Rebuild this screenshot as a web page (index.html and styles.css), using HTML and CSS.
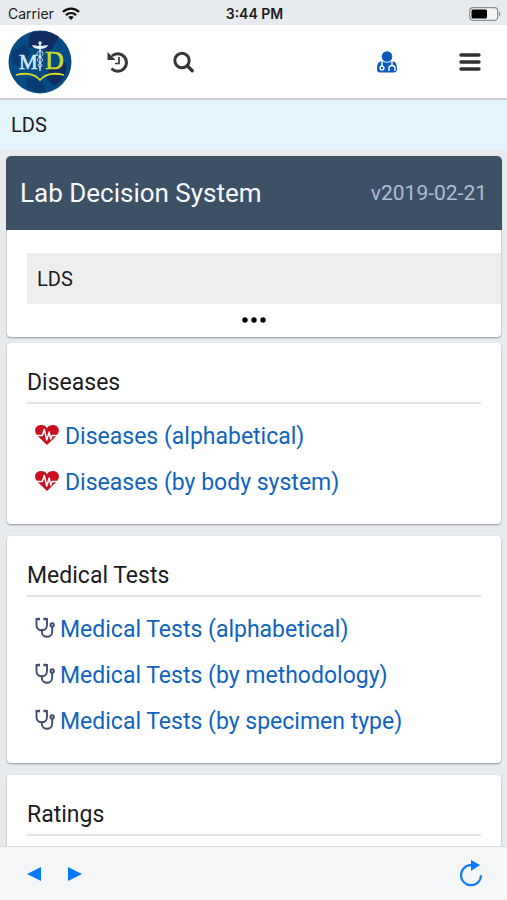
FILE: index.html
```html
<!DOCTYPE html>
<html lang="en">
<head>
<meta charset="utf-8">
<meta name="viewport" content="width=device-width, initial-scale=1">
<title>Lab Decision System</title>
<link rel="stylesheet" href="styles.css">
</head>
<body>
<svg class="defs" aria-hidden="true">
  <symbol id="heart" viewBox="0 0 24 20">
    <path fill="#c8101e" d="M12 20 2.200 10.500C-2.500 4.500 1.500 0 6 0c2.800 0 5 1.200 6 3.200C13 1.200 15.200 0 18 0c4.500 0 8.500 4.500 3.800 10.500z"/>
    <path fill="none" stroke="#fff" stroke-width="1.500" stroke-linejoin="round" d="M1 10.500h6.300L9.300 4.500l2.400 10.500L14.200 7l1.500 7 1.500-3.500H23"/>
  </symbol>
  <symbol id="stethoscope" viewBox="0 0 20 21">
    <g fill="none" stroke="#454b70" stroke-width="1.900" stroke-linecap="round">
      <path d="M4 2H1.500v6c0 7 10.500 7 10.500 0V2H9.500"/>
      <path d="M6.800 13v1.500c0 7 10.400 7 10.400 0V10"/>
      <circle cx="17.200" cy="8" r="1.700"/>
    </g>
    <path fill="#454b70" d="M2.500.7h2.500v2.600H2.500zM8.500.7H11v2.600H8.500z"/>
  </symbol>
</svg>

<div class="status">
  <div class="carrier">
    <span>Carrier</span>
    <svg width="18" height="13" viewBox="0 0 18 13" aria-hidden="true">
      <g fill="none" stroke="#111" stroke-width="2.400">
        <path d="M1 5c4.500-4.500 11.500-4.500 16 0"/>
        <path d="M4 8.200c2.900-2.800 7.100-2.800 10 0"/>
      </g>
      <path fill="#111" d="M9 13 6.200 10c1.600-1.500 4-1.500 5.600 0z"/>
    </svg>
  </div>
  <div class="clock">3:44 PM</div>
  <svg class="battery" width="32" height="14" viewBox="0 0 32 14" aria-hidden="true">
    <rect x=".7" y=".7" width="28" height="12.600" rx="3.500" fill="#f4f5f6" stroke="#8d9092" stroke-width="1.200"/>
    <rect x="2.500" y="2.500" width="15.500" height="9" rx="1.500"/>
    <path fill="#8d9092" d="M30 4.500q3 2.500 0 5z"/>
  </svg>
</div>

<header class="topbar">
  <a class="logo" href="#" aria-label="Home">
    <svg width="64" height="64" viewBox="0 0 64 64" aria-hidden="true">
      <circle cx="32" cy="32" r="31.500" fill="#064b83"/>
      <path fill="#122c62" d="M22 4c10-5 22-3 29 3l-7 12-5 3-7-6-12 2zM40 40l18-8c2 10-3 19-12 24l-8-8z"/>
      <path fill="#0b3a72" d="M4 22l13-8 5 9-8 14-9-3zM20 48l14 2 4 12c-7 1-15-1-20-6z"/>
      <text class="logo-letter" x="11" y="39" font-size="21" fill="#cfe8fb" stroke="#cfe8fb">M</text>
      <text class="logo-letter" x="37" y="39" font-size="26" fill="#cddc28" stroke="#cddc28">D</text>
      <g fill="none" stroke="#e5f1fb">
        <path stroke-width="1.300" d="M32 14v27"/>
        <path stroke-width=".9" d="M32 20c-4 3-4 5 0 7s3 4 0 6-2 3 0 5M32 20c4 3 4 5 0 7s-3 4 0 6 2 3 0 5"/>
      </g>
      <path fill="#e5f1fb" d="M32 19c-3 0-7-1-8-4l7 1 1-2 1 2 7-1c-1 3-5 4-8 4z"/>
      <circle cx="32" cy="13" r="1.700" fill="#e5f1fb"/>
      <path fill="none" stroke="#cddc28" stroke-width="1.800" d="M8 45c8-2 18-2 24 5 6-7 16-7 24-5"/>
    </svg>
  </a>
  <button class="tool" type="button" aria-label="History">
    <svg width="22" height="22" viewBox="0 0 22 22" aria-hidden="true">
      <path fill="none" stroke="#35383b" stroke-width="3" d="M5 5a8.700 8.700 0 1 1-.500 12.500"/>
      <path fill="#35383b" d="M.5 1v8h8z"/>
      <path fill="none" stroke="#35383b" stroke-width="1.700" d="M12 6v6.500H8"/>
    </svg>
  </button>
  <button class="tool" type="button" aria-label="Search">
    <svg width="22" height="22" viewBox="0 0 22 22" aria-hidden="true">
      <circle cx="9" cy="9.500" r="7.200" fill="none" stroke="#35383b" stroke-width="3"/>
      <path stroke="#35383b" stroke-width="3.400" stroke-linecap="round" d="m14.500 15 4.700 4.700"/>
    </svg>
  </button>
  <span class="spacer"></span>
  <button class="tool profile" type="button" aria-label="Profile">
    <svg width="20" height="22" viewBox="0 0 20 22" aria-hidden="true">
      <circle cx="10" cy="5.500" r="5.300" fill="#0b5bbd"/>
      <path fill="#0b5bbd" d="M5 10q5 3.500 10 0c3.500.5 5 3 5 8 0 2.500-1 3.500-3 3.500H3c-2 0-3-1-3-3.500 0-5 1.500-7.500 5-8z"/>
      <g fill="none" stroke="#fff" stroke-width="1.400">
        <path d="M5 10v5M15 10v4"/>
        <circle cx="5" cy="17" r="1.900"/>
        <path d="M12 20v-2.500c0-4 6-4 6 0V20"/>
      </g>
    </svg>
  </button>
  <button class="tool" type="button" aria-label="Menu">
    <svg width="22" height="20" viewBox="0 0 22 20" aria-hidden="true">
      <path fill="none" stroke="#2e3032" stroke-width="3.400" stroke-linecap="round" d="M2 3h18M2 10h18M2 17h18"/>
    </svg>
  </button>
</header>

<nav class="crumbs" aria-label="Breadcrumb">LDS</nav>

<main class="content">
  <section class="card intro">
    <div class="title-bar">
      <h1>Lab Decision System</h1>
      <span class="version">v2019-02-21</span>
    </div>
    <div class="summary">LDS</div>
    <button class="more" type="button" aria-label="More">
      <svg width="24" height="6" viewBox="0 0 24 6" aria-hidden="true"><circle cx="3" cy="3" r="2.700"/><circle cx="12" cy="3" r="2.700"/><circle cx="21" cy="3" r="2.700"/></svg>
    </button>
  </section>

  <section class="card">
    <h2>Diseases</h2>
    <ul>
      <li><svg class="heart" aria-hidden="true"><use href="#heart"/></svg><a href="#">Diseases (alphabetical)</a></li>
      <li><svg class="heart" aria-hidden="true"><use href="#heart"/></svg><a href="#">Diseases (by body system)</a></li>
    </ul>
  </section>

  <section class="card">
    <h2>Medical Tests</h2>
    <ul>
      <li><svg class="steth" aria-hidden="true"><use href="#stethoscope"/></svg><a href="#">Medical Tests (alphabetical)</a></li>
      <li><svg class="steth" aria-hidden="true"><use href="#stethoscope"/></svg><a href="#">Medical Tests (by methodology)</a></li>
      <li><svg class="steth" aria-hidden="true"><use href="#stethoscope"/></svg><a href="#">Medical Tests (by specimen type)</a></li>
    </ul>
  </section>

  <section class="card">
    <h2>Ratings</h2>
  </section>
</main>

<footer class="browser-bar">
  <button type="button" aria-label="Back">
    <svg width="14" height="14" viewBox="0 0 14 14" aria-hidden="true"><path fill="#067aff" d="M14 0v14L0 7z"/></svg>
  </button>
  <button type="button" aria-label="Forward">
    <svg width="14" height="14" viewBox="0 0 14 14" aria-hidden="true"><path fill="#067aff" d="M0 0v14l14-7z"/></svg>
  </button>
  <span class="spacer"></span>
  <button type="button" aria-label="Reload">
    <svg width="24" height="27" viewBox="0 0 24 27" aria-hidden="true">
      <path fill="none" stroke="#137df5" stroke-width="2.200" d="M13 5.200h-1.500a10 10 0 1 0 10.500 10"/>
      <path fill="#067aff" d="M12 0v11l9-6z"/>
    </svg>
  </button>
</footer>
</body>
</html>
```

FILE: styles.css
```css
* {
  box-sizing: border-box;
}

body {
  margin: 0;
  height: 100vh;
  display: flex;
  flex-direction: column;
  overflow: hidden;
  background: #e8ebee;
  color: #1b1c1e;
  font-family: Roboto, "Liberation Sans", sans-serif;
}

.defs {
  display: none;
}

button {
  display: flex;
  padding: 0;
  border: 0;
  background: none;
}

svg {
  display: block;
  flex: none;
}

h1,
h2,
ul {
  margin: 0;
  padding: 0;
  font-weight: 400;
}

.spacer {
  flex: 1;
}

.status {
  flex: none;
  display: grid;
  grid-template-columns: 1fr auto 1fr;
  align-items: center;
  height: 25px;
  padding: 2px 6px 0 8px;
  background: #e8ebed;
  font-family: Inter, sans-serif;
  font-size: 14px;
}

.carrier {
  display: flex;
  align-items: center;
  gap: 8px;
}

.clock {
  font-weight: 600;
}

.battery {
  justify-self: end;
}

.topbar {
  flex: none;
  display: flex;
  align-items: center;
  height: 75px;
  padding: 0 26px 0 8px;
  border-bottom: 2px solid #c9cdd1;
  background: #fff;
}

.logo {
  margin-right: 35px;
}

.logo-letter {
  font-family: "Liberation Serif", serif;
  stroke-width: 0.6px;
}

.tool {
  margin-right: 44px;
}

.tool.profile {
  margin-right: 62px;
}

.tool:last-child {
  margin-right: 0;
}

.crumbs {
  flex: none;
  padding: 0 11px;
  background: #e4f4fc;
  font-size: 20px;
  line-height: 50px;
}

.content {
  flex: 1;
  min-height: 0;
  display: flex;
  flex-direction: column;
  gap: 12px;
  padding: 6px 6px 0 7px;
  overflow: hidden;
}

.card {
  flex: none;
  padding: 20px 20px 18px;
  border-radius: 4px;
  background: #fff;
  box-shadow: 0 1px 2px #8e959c;
}

.intro {
  margin-bottom: -6px;
  padding: 0 0 14px;
}

.title-bar {
  display: flex;
  align-items: center;
  justify-content: space-between;
  margin: 0 -1px;
  padding: 0 15px 0 14px;
  border-radius: 5px 5px 0 0;
  background: #3d5166;
  color: #f5f8fb;
  line-height: 74px;
}

h1 {
  font-size: 26px;
}

.version {
  color: #aebdcf;
  font-size: 21px;
}

.summary {
  margin: 23px 0 0 20px;
  padding: 1px 10px 0;
  background: #eee;
  font-size: 20px;
  line-height: 50px;
}

.more {
  margin: 13px auto 0;
}

h2 {
  margin-bottom: 10px;
  padding-top: 1px;
  border-bottom: 2px solid #e2e4e6;
  font-size: 23px;
  line-height: 38px;
}

ul {
  list-style: none;
}

li {
  display: flex;
  align-items: center;
  padding-left: 8px;
  line-height: 46px;
}

li a {
  color: #1064bf;
  font-size: 23px;
  text-decoration: none;
}

.heart {
  width: 24px;
  height: 20px;
  margin: 0 6px 5px 0;
}

.steth {
  width: 20px;
  height: 21px;
  margin: 0 5px 5px 0;
}

.browser-bar {
  flex: none;
  display: flex;
  align-items: center;
  gap: 27px;
  height: 54px;
  padding: 0 24px 0 27px;
  border-top: 1px solid #dadde0;
  background: #f4f6f8;
}
```
